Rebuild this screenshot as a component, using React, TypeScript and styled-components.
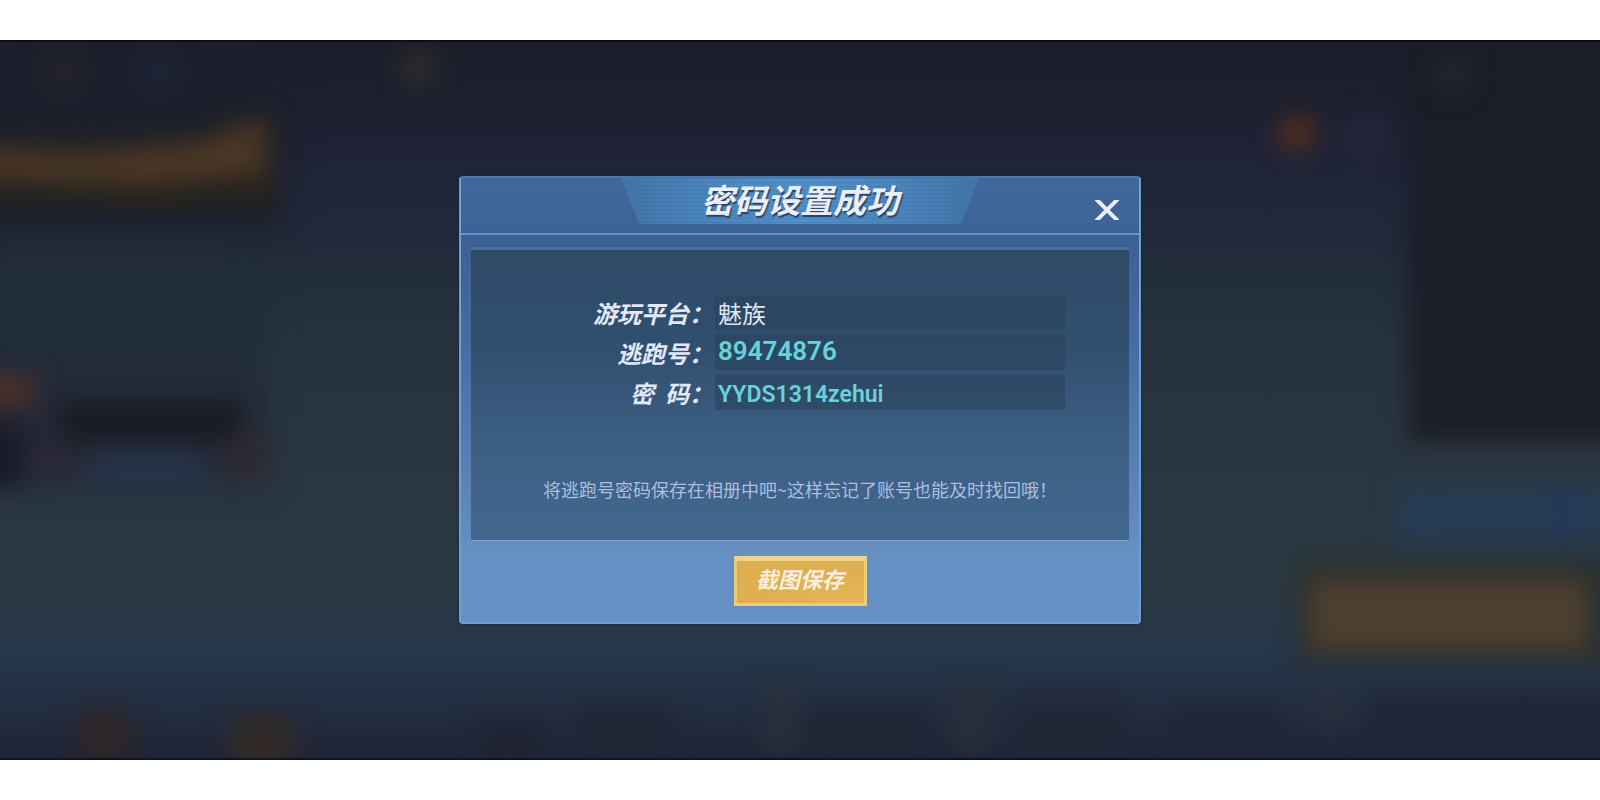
import React from "react";
import styled, { createGlobalStyle } from "styled-components";

const GlobalStyle = createGlobalStyle`
  *, *::before, *::after { box-sizing: border-box; }
  body {
    margin: 0;
    background: #ffffff;
    font-family: "Noto Sans CJK SC", "Noto Sans", sans-serif;
  }
`;

const Page = styled.div`
  display: flex;
  flex-direction: column;
  min-height: 100vh;
  padding: 40px 0;
`;

const Stage = styled.main`
  position: relative;
  flex: 1;
  display: flex;
  align-items: center;
  justify-content: center;
  overflow: hidden;
  border-top: 2px solid #0c0d15;
  border-bottom: 2px solid #10131f;
  background: linear-gradient(
    180deg,
    #1b1d29 0%,
    #1e2031 10%,
    #20253a 20%,
    #212b3a 29%,
    #25323d 40%,
    #29363f 55%,
    #2a3841 75%,
    #26374a 85%,
    #232f42 92%,
    #1f2436 100%
  );
`;

const Scenery = styled.svg`
  position: absolute;
  inset: 0;
  width: 100%;
  height: 100%;
`;

const Dialog = styled.section`
  position: relative;
  display: flex;
  flex-direction: column;
  width: 682px;
  max-width: 100%;
  border: 2px solid #6fa0d2;
  border-top-color: #4a78ac;
  border-radius: 4px;
  background: linear-gradient(180deg, #40689b 0%, #3e6194 15%, #466ba2 35%, #5880b5 65%, #668fc2 84%, #6790c6 100%);
  box-shadow: 0 0 3px #12233a;
`;

const Header = styled.header`
  display: grid;
  grid-template-columns: 1fr auto 1fr;
  height: 57px;
  border-bottom: 2px solid #6790cf;
`;

const TitleTab = styled.div`
  grid-column: 2;
  display: flex;
  align-items: flex-start;
  justify-content: center;
  width: 358px;
  height: 46px;
  clip-path: polygon(0 0, 100% 0, 340px 100%, 18px 100%);
  background:
    repeating-linear-gradient(180deg, rgba(20, 60, 110, 0.12) 0 1px, transparent 1px 4px),
    linear-gradient(90deg, #4275a9 0%, #4b85bc 25%, #528fc8 50%, #4b85bc 75%, #4275a9 100%);
`;

const Title = styled.h1`
  margin: 0;
  color: #e9eef8;
  font-size: 33px;
  font-weight: 700;
  font-style: italic;
  line-height: 42px;
  text-shadow: 1px 2px 1px #2a4062;
`;

const CloseButton = styled.button`
  justify-self: end;
  align-self: center;
  display: flex;
  margin: 8px 16px 0 0;
  padding: 4px;
  border: 0;
  background: none;
  cursor: pointer;
`;

const Panel = styled.div`
  display: flex;
  flex-direction: column;
  align-items: center;
  margin: 12px 10px 0;
  padding: 45px 0 38px;
  border-top: 3px solid #4b70a2;
  border-bottom: 1px solid #7da3d4;
  background: linear-gradient(180deg, #2e4a67 0%, #305070 35%, #3c5e82 65%, #446790 100%) padding-box;
`;

const Fields = styled.form`
  display: flex;
  flex-direction: column;
  gap: 5px;
  width: 470px;
  margin-right: 64px;
  align-self: flex-end;
`;

const Field = styled.div`
  display: grid;
  grid-template-columns: 118px 1fr;
  column-gap: 2px;
  height: 35px;
`;

const Label = styled.label`
  justify-self: end;
  color: #e2e8f8;
  font-size: 24px;
  font-weight: 700;
  font-style: italic;
  line-height: 35px;
  white-space: pre;
`;

type ValueKind = "text" | "number" | "code";

const VALUE_FONT: Record<ValueKind, string> = {
  text: `400 24px/32px "Noto Sans CJK SC", sans-serif`,
  number: `600 26px/32px Roboto, sans-serif`,
  code: `600 23px/32px Roboto, sans-serif`,
};

const VALUE_PADDING: Record<ValueKind, string> = {
  text: "0 3px 1px",
  number: "0 3px 3px",
  code: "3px 3px 0",
};

const Value = styled.input<{ $kind: ValueKind }>`
  width: 100%;
  height: 35px;
  padding: ${(p) => VALUE_PADDING[p.$kind]};
  border: 0;
  border-radius: 0;
  outline: 0;
  background: rgba(43, 66, 92, 0.6);
  color: ${(p) => (p.$kind === "text" ? "#dfe6f5" : "#68d2da")};
  font: ${(p) => VALUE_FONT[p.$kind]};
`;

const Hint = styled.p`
  margin: 66px 0 0;
  color: #a9bfdf;
  font-size: 18px;
  line-height: 26px;
  white-space: nowrap;
`;

const Footer = styled.footer`
  display: flex;
  justify-content: center;
  padding: 15px 0 16px;
`;

const SaveButton = styled.button`
  width: 133px;
  height: 50px;
  padding: 0 0 8px;
  border: 3px solid #eacd78;
  border-top: 5px solid #ecd68e;
  background: linear-gradient(165deg, #dcae50 0%, #dfb052 55%, #e4b755 100%);
  color: #fbeedd;
  font-family: inherit;
  font-size: 22px;
  font-weight: 700;
  font-style: italic;
  line-height: 32px;
  cursor: pointer;
`;

const FIELDS: { id: string; label: string; value: string; kind: ValueKind }[] = [
  { id: "platform", label: "游玩平台：", value: "魅族", kind: "text" },
  { id: "account", label: "逃跑号：", value: "89474876", kind: "number" },
  { id: "password", label: "密  码：", value: "YYDS1314zehui", kind: "code" },
];

function LobbyScenery() {
  return (
    <Scenery viewBox="0 0 1600 720" preserveAspectRatio="none" aria-hidden="true">
      <defs>
        <filter id="soft" x="-50%" y="-50%" width="200%" height="200%" colorInterpolationFilters="sRGB">
          <feGaussianBlur stdDeviation="12" />
        </filter>
        <filter id="softer" x="-50%" y="-50%" width="200%" height="200%" colorInterpolationFilters="sRGB">
          <feGaussianBlur stdDeviation="18" />
        </filter>
      </defs>
      <g filter="url(#softer)">
        <rect x="-30" y="-30" width="310" height="220" fill="#1c1f2b" />
        <rect x="-30" y="190" width="290" height="160" fill="#212c3a" />
        <rect x="-30" y="340" width="290" height="100" fill="#242938" />
      </g>
      <g filter="url(#soft)">
        <rect x="1408" y="-20" width="230" height="422" fill="#1b1d28" />
        <path d="M-30 100 L190 95 L270 76 L278 166 L200 168 L-30 164 Z" fill="#26231f" />
        <path d="M-30 104 L80 112 L200 100 L264 74 L268 132 L150 144 L-30 136 Z" fill="#4a3625" />
        <rect x="-30" y="334" width="65" height="32" fill="#4a2f29" />
        <rect x="60" y="362" width="180" height="40" fill="#191b23" />
        <rect x="-30" y="385" width="54" height="62" fill="#191b28" />
        <rect x="92" y="412" width="110" height="42" fill="#263449" />
        <circle cx="244" cy="416" r="22" fill="#302932" />
        <circle cx="52" cy="418" r="20" fill="#2d2836" />
        <rect x="1396" y="444" width="230" height="58" fill="#263c52" />
        <rect x="1410" y="470" width="24" height="24" fill="#233d5a" />
        <rect x="1545" y="452" width="36" height="42" fill="#24395a" />
      </g>
      <g filter="url(#soft)">
        <rect x="1298" y="524" width="310" height="100" fill="#292e2c" />
        <rect x="1310" y="540" width="278" height="72" fill="#4e3f2e" />
        <circle cx="1297" cy="92" r="18" fill="#542f1c" />
        <circle cx="1368" cy="94" r="22" fill="#26263a" />
        <circle cx="418" cy="26" r="18" fill="#2e2f2b" />
        <circle cx="158" cy="30" r="18" fill="#1e263a" />
        <circle cx="62" cy="30" r="22" fill="#23232f" />
        <circle cx="1452" cy="32" r="18" fill="#24272b" />
        <circle cx="104" cy="698" r="30" fill="#2e2627" />
        <circle cx="262" cy="708" r="36" fill="#312a28" />
        <rect x="480" y="680" width="60" height="60" fill="#1f2333" />
        <rect x="580" y="670" width="90" height="70" fill="#1f2535" />
        <rect x="810" y="670" width="120" height="70" fill="#1f2535" />
        <rect x="1010" y="660" width="120" height="80" fill="#202838" />
        <rect x="766" y="645" width="28" height="70" fill="#2a303b" />
        <rect x="958" y="645" width="28" height="70" fill="#2b2f3a" />
        <rect x="1170" y="670" width="110" height="60" fill="#212538" />
        <rect x="1370" y="655" width="250" height="90" fill="#202539" />
        <circle cx="1332" cy="670" r="18" fill="#28303d" />
      </g>
    </Scenery>
  );
}

export default function App() {
  return (
    <>
      <GlobalStyle />
      <Page>
        <Stage>
          <LobbyScenery />
          <Dialog role="dialog" aria-labelledby="dialog-title">
            <Header>
              <TitleTab>
                <Title id="dialog-title">密码设置成功</Title>
              </TitleTab>
              <CloseButton type="button" aria-label="关闭">
                <svg width="24" height="20" viewBox="0 0 24 20" fill="none">
                  <path d="M1-1 23 21M23-1 1 21" stroke="#e8eefa" strokeWidth="4" />
                </svg>
              </CloseButton>
            </Header>
            <Panel>
              <Fields>
                {FIELDS.map((f) => (
                  <Field key={f.id}>
                    <Label htmlFor={f.id}>{f.label}</Label>
                    <Value id={f.id} type="text" value={f.value} readOnly $kind={f.kind} />
                  </Field>
                ))}
              </Fields>
              <Hint>将逃跑号密码保存在相册中吧~这样忘记了账号也能及时找回哦！</Hint>
            </Panel>
            <Footer>
              <SaveButton type="button">截图保存</SaveButton>
            </Footer>
          </Dialog>
        </Stage>
      </Page>
    </>
  );
}
